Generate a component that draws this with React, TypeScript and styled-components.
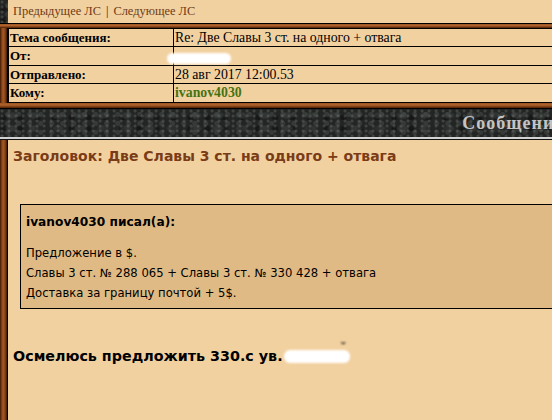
import React from "react";
import styled, { createGlobalStyle, css } from "styled-components";

const Global = createGlobalStyle`
  html, body { margin: 0; padding: 0; background: #f2d1a0; overflow: hidden; }
  body { width: 552px; height: 420px; }
`;

const stone = css`
  background-color: #222523;
  background-image:
    radial-gradient(circle at 30% 40%, rgba(140,145,140,0.28) 0 1px, transparent 2px),
    radial-gradient(circle at 70% 60%, rgba(90,95,92,0.35) 0 2px, transparent 3px),
    radial-gradient(ellipse at 50% 50%, rgba(70,74,72,0.45) 0 4px, transparent 7px),
    radial-gradient(circle at 20% 80%, rgba(10,10,10,0.5) 0 2px, transparent 4px);
  background-size: 7px 5px, 11px 9px, 23px 13px, 17px 11px;
`;

const wood = css`
  background: linear-gradient(
    to right,
    #3a1806 0,
    #6a3210 1px,
    #a55a26 3px,
    #8a4418 5px,
    #52240a 6.5px,
    #000 7px,
    #000 8px
  );
`;

const Page = styled.div`
  width: 600px;
  display: flex;
  flex-direction: column;
`;

const Band = styled.div`
  display: flex;
  align-items: stretch;
`;

const Side = styled.div<{ $kind: "stone" | "wood" }>`
  width: 8px;
  flex: none;
  ${(p) => (p.$kind === "stone" ? stone : wood)}
`;

const Nav = styled.div`
  flex: 1;
  height: 23px;
  padding-left: 5px;
  display: flex;
  align-items: center;
  font-family: "Liberation Serif", "Times New Roman", serif;
  font-size: 12.4px;
  line-height: 23px;
  color: #3a2410;
  white-space: nowrap;
`;

const NavLink = styled.a`
  color: #6e3b17;
  text-decoration: none;
`;

const Sep = styled.span`
  margin: 0 5px;
  color: #2a1a0a;
`;

const WoodRule = styled.div<{ $topLine?: boolean; $bottomLine?: boolean }>`
  height: ${(p) => (p.$topLine ? 4 : 5)}px;
  background: linear-gradient(to bottom, #9c5422 0, #b0652e 40%, #7a3a12 75%, #4e2208 100%);
  border-top: ${(p) => (p.$topLine ? "1px solid #000" : "none")};
  border-bottom: ${(p) => (p.$bottomLine ? "1px solid #000" : "none")};
`;

const InfoTable = styled.div`
  position: relative;
  flex: 1;
  display: grid;
  grid-template-columns: 165px 1fr;
  border-top: 1px solid #000;
  border-left: 1px solid #000;
  background: #f2d1a0;
  font-family: "Liberation Serif", "Times New Roman", serif;
  color: #000;
`;

const Cell = styled.div<{ $h: number; $label?: boolean; $green?: boolean }>`
  height: ${(p) => p.$h}px;
  line-height: ${(p) => p.$h}px;
  padding-left: 1px;
  font-size: ${(p) => (p.$label ? 13 : 13.8)}px;
  border-bottom: 1px solid #000;
  border-right: ${(p) => (p.$label ? "1px solid #000" : "none")};
  font-weight: ${(p) => (p.$label || p.$green ? "bold" : "normal")};
  color: ${(p) => (p.$green ? "#457314" : "#000")};
  white-space: nowrap;
  overflow: hidden;
`;

const Redact = styled.span`
  position: absolute;
  left: 158px;
  top: 24px;
  width: 64px;
  height: 11px;
  background: #fff;
  border-radius: 6px;
  filter: blur(0.8px);
`;

const TitleBar = styled.div`
  ${stone}
  height: 31px;
  box-sizing: border-box;
  border-bottom: 1px solid #111;
  box-shadow: inset 0 -2px 0 #d2d2d2;
  display: flex;
  align-items: center;
  justify-content: flex-end;
  padding-right: 35px;
  padding-bottom: 2px;
`;

const TitleText = styled.span`
  font-family: "Liberation Serif", "Times New Roman", serif;
  font-weight: bold;
  font-size: 18px;
  letter-spacing: 1px;
  color: #c4c4c4;
  white-space: nowrap;
`;

const Content = styled.div`
  flex: 1;
  height: 280px;
  padding: 8px 0 0 5px;
  font-family: "DejaVu Sans", Verdana, sans-serif;
  color: #000;
`;

const Heading = styled.div`
  font-size: 14px;
  line-height: 17px;
  font-weight: bold;
  color: #7a3c17;
  white-space: nowrap;
`;

const Quote = styled.div`
  margin: 39px 0 0 7px;
  border: 1px solid #000;
  border-right: none;
  background: #dfba85;
  padding: 10px 0 5px 5px;
`;

const QuoteTitle = styled.div`
  font-size: 12.2px;
  line-height: 15px;
  font-weight: bold;
  margin-bottom: 13px;
`;

const QuoteLine = styled.div`
  font-size: 11.6px;
  line-height: 20px;
  white-space: nowrap;
`;

const Reply = styled.div`
  margin-top: 39px;
  font-size: 14.3px;
  line-height: 17px;
  font-weight: bold;
  white-space: nowrap;
`;

const Blob = styled.span`
  position: relative;
  display: inline-block;
  width: 66px;
  height: 13px;
  vertical-align: -2px;
  margin-left: 1px;
  background: #fff;
  border-radius: 6px;
  filter: blur(0.8px);
`;

const Breve = styled.span`
  position: absolute;
  right: 3px;
  top: -5px;
  font-size: 13px;
  line-height: 6px;
  color: #000;
`;

export default function App() {
  return (
    <>
      <Global />
      <Page>
        <Band>
          <Side $kind="stone" />
          <Nav>
            <NavLink href="#">Предыдущее ЛС</NavLink>
            <Sep>|</Sep>
            <NavLink href="#">Следующее ЛС</NavLink>
          </Nav>
        </Band>
        <WoodRule $topLine />
        <Band>
          <Side $kind="wood" />
          <InfoTable>
            <Cell $h={17} $label>Тема сообщения:</Cell>
            <Cell $h={17}>Re: Две Славы 3 ст. на одного + отвага</Cell>
            <Cell $h={18} $label>От:</Cell>
            <Cell $h={18}></Cell>
            <Cell $h={17} $label>Отправлено:</Cell>
            <Cell $h={17}>28 авг 2017 12:00.53</Cell>
            <Cell $h={18} $label>Кому:</Cell>
            <Cell $h={18} $green>ivanov4030</Cell>
            <Redact />
          </InfoTable>
        </Band>
        <WoodRule $bottomLine />
        <TitleBar>
          <TitleText>Сообщения</TitleText>
        </TitleBar>
        <Band>
          <Side $kind="wood" />
          <Content>
            <Heading>Заголовок: Две Славы 3 ст. на одного + отвага</Heading>
            <Quote>
              <QuoteTitle>ivanov4030 писал(а):</QuoteTitle>
              <QuoteLine>Предложение в $.</QuoteLine>
              <QuoteLine>Славы 3 ст. № 288 065 + Славы 3 ст. № 330 428 + отвага</QuoteLine>
              <QuoteLine>Доставка за границу почтой + 5$.</QuoteLine>
            </Quote>
            <Reply>
              Осмелюсь предложить 330.с ув.
              <Blob>
                <Breve>˘</Breve>
              </Blob>
            </Reply>
          </Content>
        </Band>
      </Page>
    </>
  );
}
